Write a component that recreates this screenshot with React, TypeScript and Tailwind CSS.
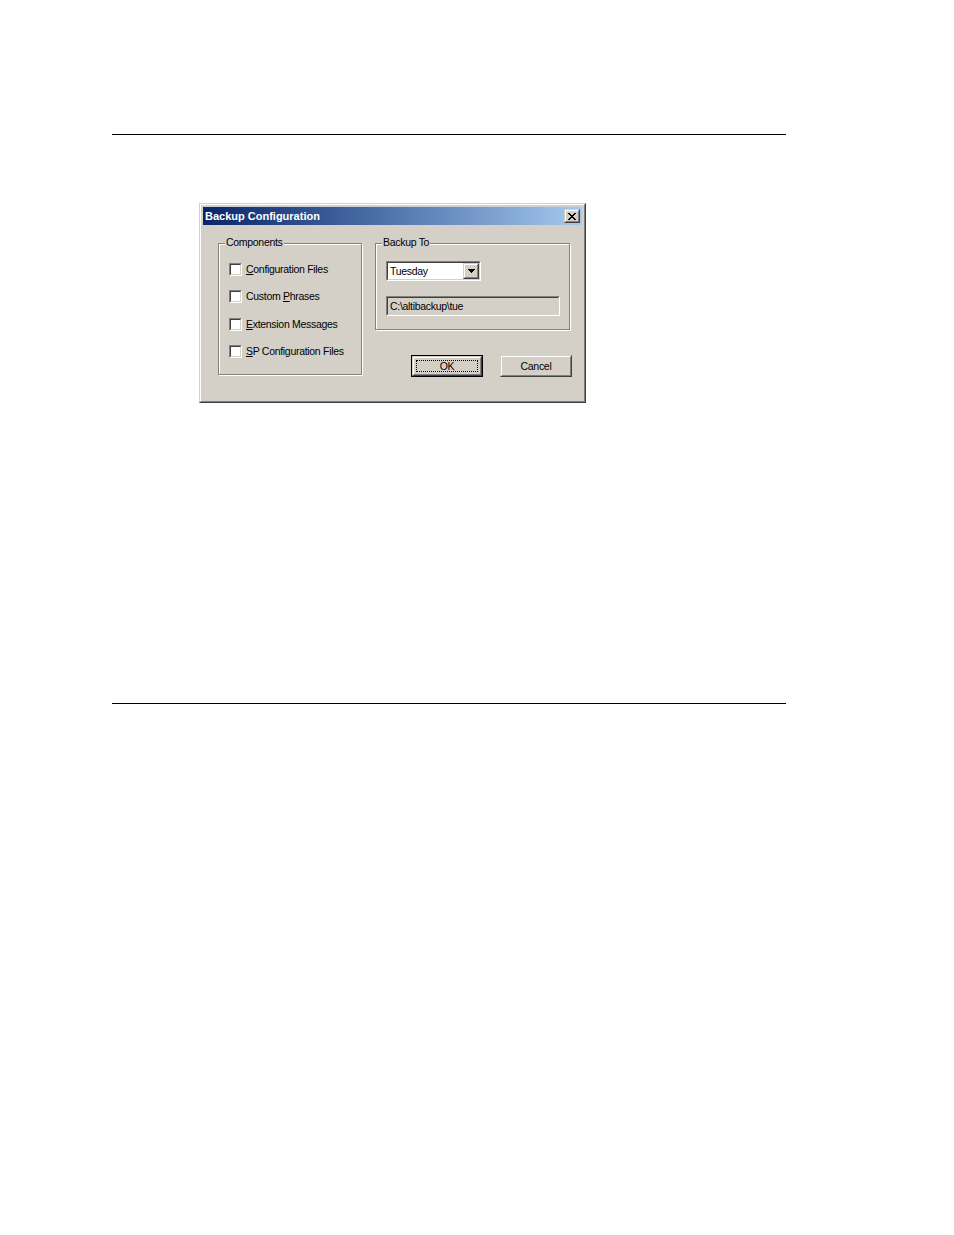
import React from "react";

const raisedOuter =
  "border border-t-[#d4d0c8] border-l-[#d4d0c8] border-r-[#404040] border-b-[#404040]";
const raisedInner =
  "border border-t-white border-l-white border-r-[#808080] border-b-[#808080]";
const sunkenOuter =
  "border border-t-[#808080] border-l-[#808080] border-r-white border-b-white";
const sunkenInner =
  "border border-t-[#404040] border-l-[#404040] border-r-[#d4d0c8] border-b-[#d4d0c8]";

function Check({ u, rest, pre = "" }: { u: string; rest: string; pre?: string }) {
  return (
    <div className="flex items-center h-[14px]">
      <div className={`${sunkenOuter} w-[13px] h-[13px]`}>
        <div className={`${sunkenInner} w-full h-full bg-white`} />
      </div>
      <span className="ml-[4px] leading-none">
        {pre}
        <span className="underline underline-offset-[1px]">{u}</span>
        {rest}
      </span>
    </div>
  );
}

function Group({ title, className, children }: { title: string; className: string; children?: React.ReactNode }) {
  return (
    <div className={`relative ${className}`}>
      <div className="absolute inset-0 border border-[#808080] shadow-[inset_1px_1px_0_#fff,1px_1px_0_#fff]" />
      <span className="absolute left-[7px] top-[-7px] px-[1px] bg-[#d4d0c8] leading-[13px]">{title}</span>
      <div className="relative">{children}</div>
    </div>
  );
}

function Button({ children, def }: { children: React.ReactNode; def?: boolean }) {
  if (def) {
    return (
      <div className="w-[72px] h-[22px] border border-black">
        <div className={`${raisedOuter} w-full h-full`}>
          <div className={`${raisedInner} w-full h-full flex items-center justify-center p-[2px]`}>
            <div className="w-full h-full border border-dotted border-black flex items-center justify-center leading-none">
              {children}
            </div>
          </div>
        </div>
      </div>
    );
  }
  return (
    <div className={`${raisedOuter} w-[72px] h-[22px]`}>
      <div className={`${raisedInner} w-full h-full flex items-center justify-center leading-none`}>{children}</div>
    </div>
  );
}

export default function App() {
  return (
    <div className="w-[954px] h-[1235px] bg-white pt-[134px] pl-[112px] font-['Liberation_Sans',Arial,sans-serif] text-black">
      <div className="h-px w-[674px] bg-black" />
      <div className={`mt-[68px] ml-[87px] w-[387px] h-[200px] ${raisedOuter} text-[10.5px] tracking-[-0.3px]`}>
        <div className={`${raisedInner} w-full h-full bg-[#d4d0c8] p-[2px] flex flex-col`}>
          <div className="h-[18px] flex items-center justify-between bg-gradient-to-r from-[#0a246a] to-[#a6caf0] pl-[2px] pr-[2px]">
            <span className="text-white font-bold text-[11px] tracking-normal leading-none">Backup Configuration</span>
            <div className={`${raisedOuter} w-[16px] h-[14px] bg-[#d4d0c8]`}>
              <div className={`${raisedInner} w-full h-full flex items-center justify-center`}>
                <svg width="8" height="7" viewBox="0 0 8 7" shapeRendering="crispEdges">
                  <path d="M0 0h2v1h-2zM6 0h2v1h-2zM1 1h2v1h-2zM5 1h2v1h-2zM2 2h4v1h-4zM3 3h2v1h-2zM2 4h4v1h-4zM1 5h2v1h-2zM5 5h2v1h-2zM0 6h2v1h-2zM6 6h2v1h-2z" fill="#000" />
                </svg>
              </div>
            </div>
          </div>
          <div className="flex pl-[15px] pt-[18px]">
            <Group title="Components" className="w-[144px] h-[132px]">
              <div className="pl-[11px] pt-[19px] flex flex-col gap-[13.5px]">
                <Check u="C" rest="onfiguration Files" />
                <Check pre="Custom " u="P" rest="hrases" />
                <Check u="E" rest="xtension Messages" />
                <Check u="S" rest="P Configuration Files" />
              </div>
            </Group>
            <div className="ml-[13px] w-[197px] flex flex-col">
              <Group title="Backup To" className="w-[195px] h-[87px]">
                <div className="pl-[11px] pt-[18px]">
                  <div className={`${sunkenOuter} w-[95px] h-[20px]`}>
                    <div className={`${sunkenInner} w-full h-full bg-white flex items-center`}>
                      <span className="flex-1 pl-[2px] leading-none">Tuesday</span>
                      <div className={`${raisedOuter} w-[16px] h-full bg-[#d4d0c8]`}>
                        <div className={`${raisedInner} w-full h-full flex items-center justify-center`}>
                          <svg width="7" height="4" viewBox="0 0 7 4" shapeRendering="crispEdges">
                            <path d="M0 0h7v1h-7zM1 1h5v1h-5zM2 2h3v1h-3zM3 3h1v1h-1z" fill="#000" />
                          </svg>
                        </div>
                      </div>
                    </div>
                  </div>
                  <div className={`${sunkenOuter} mt-[15px] w-[174px] h-[20px]`}>
                    <div className={`${sunkenInner} w-full h-full bg-[#d4d0c8] flex items-center pl-[2px] leading-none`}>
                      C:\altibackup\tue
                    </div>
                  </div>
                </div>
              </Group>
              <div className="mt-[25px] flex justify-end gap-[17px]">
                <Button def>OK</Button>
                <Button>Cancel</Button>
              </div>
            </div>
          </div>
        </div>
      </div>
      <div className="mt-[300px] h-px w-[674px] bg-black" />
    </div>
  );
}
